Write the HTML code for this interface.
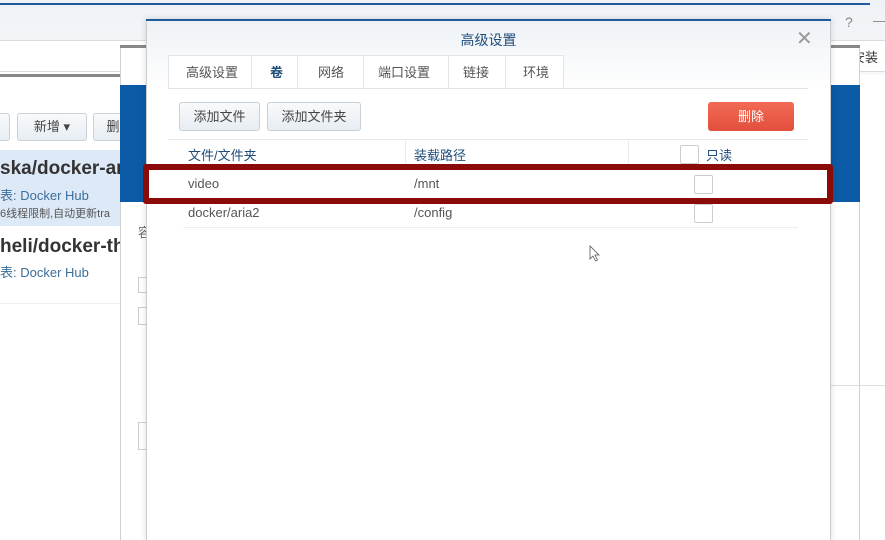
<!DOCTYPE html>
<html><head><meta charset="utf-8"><style>
*{margin:0;padding:0;box-sizing:border-box}
body{width:885px;height:540px;overflow:hidden;background:#fff;position:relative;font-family:"Liberation Sans","Noto Sans CJK SC",sans-serif;color:#333}
.abs{position:absolute}
.btn{position:absolute;border:1px solid #c8d0d8;border-radius:3px;background:linear-gradient(#f8fafc,#e8edf2);font-size:13px;color:#444;text-align:center}
</style></head><body>
<div class="abs" style="left:0;top:0;width:885px;height:75px;background:linear-gradient(#eef2f6,#f6f8fa)"></div>
<div class="abs" style="left:0;top:3px;width:870px;height:2px;background:#1f5a9a"></div>
<div class="abs" style="left:0;top:40px;width:885px;height:32px;background:#fff;border-top:1px solid #d8dde2;border-bottom:1px solid #d8dde2"></div>
<div class="abs" style="left:845px;top:14px;font-size:14px;color:#888">?</div>
<div class="abs" style="left:873px;top:12px;font-size:14px;color:#888">—</div>
<div class="abs" style="left:852px;top:47px;font-size:13px;color:#333">安装</div>
<div class="abs" style="left:0;top:72px;width:125px;height:468px;background:#fff"></div>
<div class="abs" style="left:0;top:74px;width:125px;height:3px;background:#888"></div>
<div class="btn" style="left:-5px;top:113px;width:15px;height:28px"></div>
<div class="btn" style="left:17px;top:113px;width:70px;height:28px;line-height:26px">新增 ▾</div>
<div class="btn" style="left:93px;top:113px;width:40px;height:28px;line-height:26px">删</div>
<div class="abs" style="left:0;top:150px;width:125px;height:76px;background:#dde9f7"></div>
<div class="abs" style="left:0;top:158px;font-size:19px;font-weight:bold;color:#333;white-space:nowrap">ska/docker-ar</div>
<div class="abs" style="left:0;top:185px;font-size:13px;color:#3c6e9a;white-space:nowrap">表: Docker Hub</div>
<div class="abs" style="left:0;top:205px;font-size:11px;color:#555;white-space:nowrap">6线程限制,自动更新tra</div>
<div class="abs" style="left:0;top:236px;font-size:19px;font-weight:bold;color:#333;white-space:nowrap">heli/docker-th</div>
<div class="abs" style="left:0;top:262px;font-size:13px;color:#3c6e9a;white-space:nowrap">表: Docker Hub</div>
<div class="abs" style="left:0;top:303px;width:125px;height:1px;background:#eee"></div>
<div class="abs" style="left:120px;top:45px;width:740px;height:495px;background:#fff;border-left:1px solid #d0d0d0;border-right:1px solid #d0d0d0"></div>
<div class="abs" style="left:120px;top:45px;width:740px;height:3px;background:#888"></div>
<div class="abs" style="left:120px;top:85px;width:740px;height:117px;background:#0b5aa5"></div>
<div class="abs" style="left:138px;top:222px;font-size:13px;color:#666">容</div>
<div class="abs" style="left:138px;top:277px;width:10px;height:16px;border:1px solid #ccc;background:#fff"></div>
<div class="abs" style="left:138px;top:307px;width:10px;height:18px;border:1px solid #ccc"></div>
<div class="abs" style="left:138px;top:422px;width:10px;height:28px;border:1px solid #ccc"></div>
<div class="abs" style="left:830px;top:385px;width:55px;height:1px;background:#ddd"></div>
<div class="abs" style="left:146px;top:19px;width:685px;height:521px;background:#fff;border-left:1px solid #ccc;border-right:1px solid #ccc;box-shadow:0 0 6px rgba(0,0,0,.15)"></div>
<div class="abs" style="left:146px;top:19px;width:685px;height:2px;background:#1f5a9a"></div>
<div class="abs" style="left:147px;top:21px;width:683px;height:70px;background:linear-gradient(#eef2f6,#fff)"></div>
<div class="abs" style="left:146px;top:30px;width:685px;text-align:center;font-size:14px;color:#1f4e7a">高级设置</div>
<div class="abs" style="left:796px;top:26px;font-size:20px;color:#999;font-weight:300">✕</div>
<div class="abs" style="left:168px;top:55px;width:396px;height:34px;border:1px solid #e2e6ea;border-bottom:none;background:#fff"></div>
<div class="abs" style="left:168px;top:88px;width:640px;height:1px;background:#dfe3e8"></div>
<div class="abs" style="top:62px;left:186px;font-size:13px;color:#555">高级设置</div>
<div class="abs" style="top:62px;left:270px;font-size:13px;color:#1f4e7a;font-weight:bold">卷</div>
<div class="abs" style="top:62px;left:318px;font-size:13px;color:#555">网络</div>
<div class="abs" style="top:62px;left:378px;font-size:13px;color:#555">端口设置</div>
<div class="abs" style="top:62px;left:463px;font-size:13px;color:#555">链接</div>
<div class="abs" style="top:62px;left:523px;font-size:13px;color:#555">环境</div>
<div class="abs" style="left:251px;top:55px;width:1px;height:33px;background:#e2e6ea"></div>
<div class="abs" style="left:297px;top:55px;width:1px;height:33px;background:#e2e6ea"></div>
<div class="abs" style="left:363px;top:55px;width:1px;height:33px;background:#e2e6ea"></div>
<div class="abs" style="left:448px;top:55px;width:1px;height:33px;background:#e2e6ea"></div>
<div class="abs" style="left:505px;top:55px;width:1px;height:33px;background:#e2e6ea"></div>
<div class="btn" style="left:179px;top:102px;width:81px;height:29px;line-height:27px">添加文件</div>
<div class="btn" style="left:267px;top:102px;width:94px;height:29px;line-height:27px">添加文件夹</div>
<div class="abs" style="left:708px;top:102px;width:86px;height:29px;line-height:29px;border-radius:3px;background:linear-gradient(#f26a55,#e24f3c);color:#fff;text-align:center;font-size:13px">删除</div>
<div class="abs" style="left:168px;top:139px;width:640px;height:1px;background:#e4e8ec"></div>
<div class="abs" style="left:405px;top:140px;width:1px;height:30px;background:#e8ecef"></div>
<div class="abs" style="left:628px;top:140px;width:1px;height:30px;background:#e8ecef"></div>
<div class="abs" style="left:188px;top:145px;font-size:13px;color:#1f4e7a">文件/文件夹</div>
<div class="abs" style="left:414px;top:145px;font-size:13px;color:#1f4e7a">装载路径</div>
<div class="abs" style="left:680px;top:145px;width:19px;height:19px;border:1px solid #ccc;border-radius:2px;background:#fff"></div>
<div class="abs" style="left:706px;top:145px;font-size:13px;color:#1f4e7a">只读</div>
<div class="abs" style="left:143px;top:164px;width:690px;height:40px;border:6px solid #8b0a0a;border-radius:3px;background:#fff"></div>
<div class="abs" style="left:188px;top:176px;font-size:13px;color:#555">video</div>
<div class="abs" style="left:414px;top:176px;font-size:13px;color:#555">/mnt</div>
<div class="abs" style="left:694px;top:175px;width:19px;height:19px;border:1px solid #ccc;border-radius:2px"></div>
<div class="abs" style="left:188px;top:205px;font-size:13px;color:#555">docker/aria2</div>
<div class="abs" style="left:414px;top:205px;font-size:13px;color:#555">/config</div>
<div class="abs" style="left:694px;top:204px;width:19px;height:19px;border:1px solid #ccc;border-radius:2px"></div>
<div class="abs" style="left:183px;top:227px;width:615px;height:1px;background:#eceff2"></div>
<svg class="abs" style="left:589px;top:245px" width="12" height="18" viewBox="0 0 12 18"><path d="M1 1 L1 14 L4 11 L6.5 16 L8.5 15 L6 10 L10 10 Z" fill="#fff" stroke="#555" stroke-width="0.8"/></svg>
</body></html>
